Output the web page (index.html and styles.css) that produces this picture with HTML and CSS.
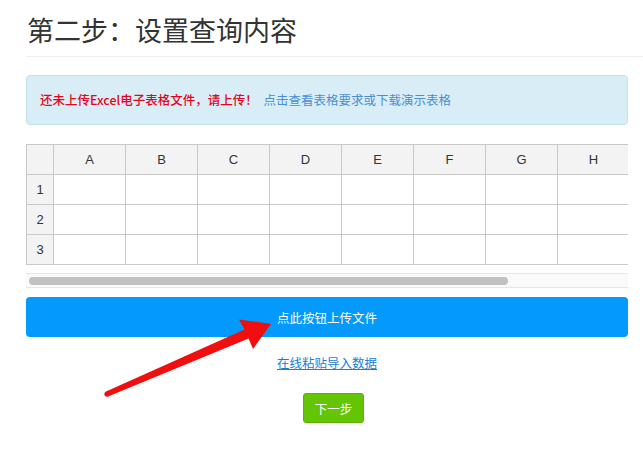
FILE: index.html
```html
<!DOCTYPE html>
<html lang="zh-CN">
<head>
<meta charset="utf-8">
<title>第二步：设置查询内容</title>
<link rel="stylesheet" href="styles.css">
</head>
<body>
<div class="page">
  <h1 class="title">第二步：设置查询内容</h1>
  <div class="content">
    <div class="alert">
      <span class="alert-warn">还未上传Excel电子表格文件，请上传！</span>
      <a class="alert-link" href="#">点击查看表格要求或下载演示表格</a>
    </div>

    <div class="sheet">
      <table class="grid">
        <colgroup>
          <col class="c-idx"><col class="c"><col class="c"><col class="c"><col class="c"><col class="c"><col class="c"><col class="c"><col class="c">
        </colgroup>
        <thead>
          <tr><th></th><th>A</th><th>B</th><th>C</th><th>D</th><th>E</th><th>F</th><th>G</th><th>H</th></tr>
        </thead>
        <tbody>
          <tr><th>1</th><td></td><td></td><td></td><td></td><td></td><td></td><td></td><td></td></tr>
          <tr><th>2</th><td></td><td></td><td></td><td></td><td></td><td></td><td></td><td></td></tr>
          <tr><th>3</th><td></td><td></td><td></td><td></td><td></td><td></td><td></td><td></td></tr>
        </tbody>
      </table>
    </div>
    <div class="scrollbar"><div class="thumb"></div></div>

    <button class="upload" type="button">点此按钮上传文件</button>
    <div class="paste"><a href="#">在线粘贴导入数据</a></div>
    <div class="next-row"><button class="next" type="button">下一步</button></div>
  </div>

  <svg class="arrow" width="643" height="457" viewBox="0 0 643 457" aria-hidden="true">
    <polygon fill="#f00e0e" points="106,391.6 244.5,329.5 239,319.5 271,324 253,349 248.6,338.6 108,396.4"/>
    <circle cx="107" cy="394" r="2.6" fill="#f00e0e"/>
  </svg>
</div>
</body>
</html>
```

FILE: styles.css
```css
html, body {
  margin: 0;
  padding: 0;
  background: #fff;
}
body {
  font-family: "Liberation Sans", "Noto Sans CJK SC", sans-serif;
  font-size: 12.5px;
  color: #333;
}
.page {
  position: relative;
  width: 643px;
  height: 457px;
  overflow: hidden;
  padding-left: 26px;
  box-sizing: border-box;
}
.title {
  margin: 0;
  padding: 12px 0 8px 1px;
  font-family: "Noto Sans CJK SC", sans-serif;
  font-weight: normal;
  font-size: 27px;
  line-height: 36px;
  color: #333;
  border-bottom: 1px solid #eee;
}
.content {
  width: 602px;
}
.alert {
  margin-top: 18px;
  height: 48px;
  line-height: 48px;
  padding: 0 13px;
  background: #d9edf7;
  border: 1px solid #bfe0ee;
  border-radius: 4px;
  font-family: "Noto Sans CJK SC", sans-serif;
  white-space: nowrap;
}
.alert-warn {
  color: #e3071d;
  font-weight: 500;
}
.alert-link {
  margin-left: 3px;
  color: #4a8fd2;
  text-decoration: none;
}
.sheet {
  margin-top: 19px;
  width: 602px;
  overflow: hidden;
}
.grid {
  border-collapse: collapse;
  table-layout: fixed;
  width: 603px;
}
.grid .c-idx { width: 27px; }
.grid .c { width: 72px; }
.grid th, .grid td {
  border: 1px solid #c9c9c9;
  height: 29px;
  padding: 0;
  font-weight: normal;
  font-size: 13px;
  text-align: center;
  color: #333;
}
.grid th {
  background: #f3f3f3;
}
.grid td {
  background: #fff;
}
.scrollbar {
  margin-top: 8px;
  height: 13px;
  border-top: 1px solid #e6e6e6;
  border-bottom: 1px solid #e6e6e6;
  background: #fafafa;
  display: flex;
  align-items: center;
  padding-left: 3px;
}
.thumb {
  width: 479px;
  height: 8px;
  border-radius: 4px;
  background: #c1c1c1;
}
.upload {
  display: block;
  margin-top: 9px;
  width: 602px;
  height: 40px;
  border: 0;
  border-radius: 4px;
  background: #0399fd;
  color: #fff;
  font-family: "Noto Sans CJK SC", sans-serif;
  font-size: 12.5px;
  padding: 0;
}
.paste {
  margin-top: 17px;
  text-align: center;
  line-height: 18px;
  font-family: "Noto Sans CJK SC", sans-serif;
}
.paste a {
  color: #1a7dd6;
  text-decoration: underline;
}
.next-row {
  margin-top: 21px;
  padding-left: 13px;
  text-align: center;
}
.next {
  width: 61px;
  height: 30px;
  border: 1px solid #5db300;
  border-radius: 3px;
  background: #64c505;
  color: #fff;
  font-family: "Noto Sans CJK SC", sans-serif;
  font-size: 12.5px;
  padding: 0;
}
.arrow {
  position: absolute;
  top: 0;
  left: 0;
  pointer-events: none;
}
```
